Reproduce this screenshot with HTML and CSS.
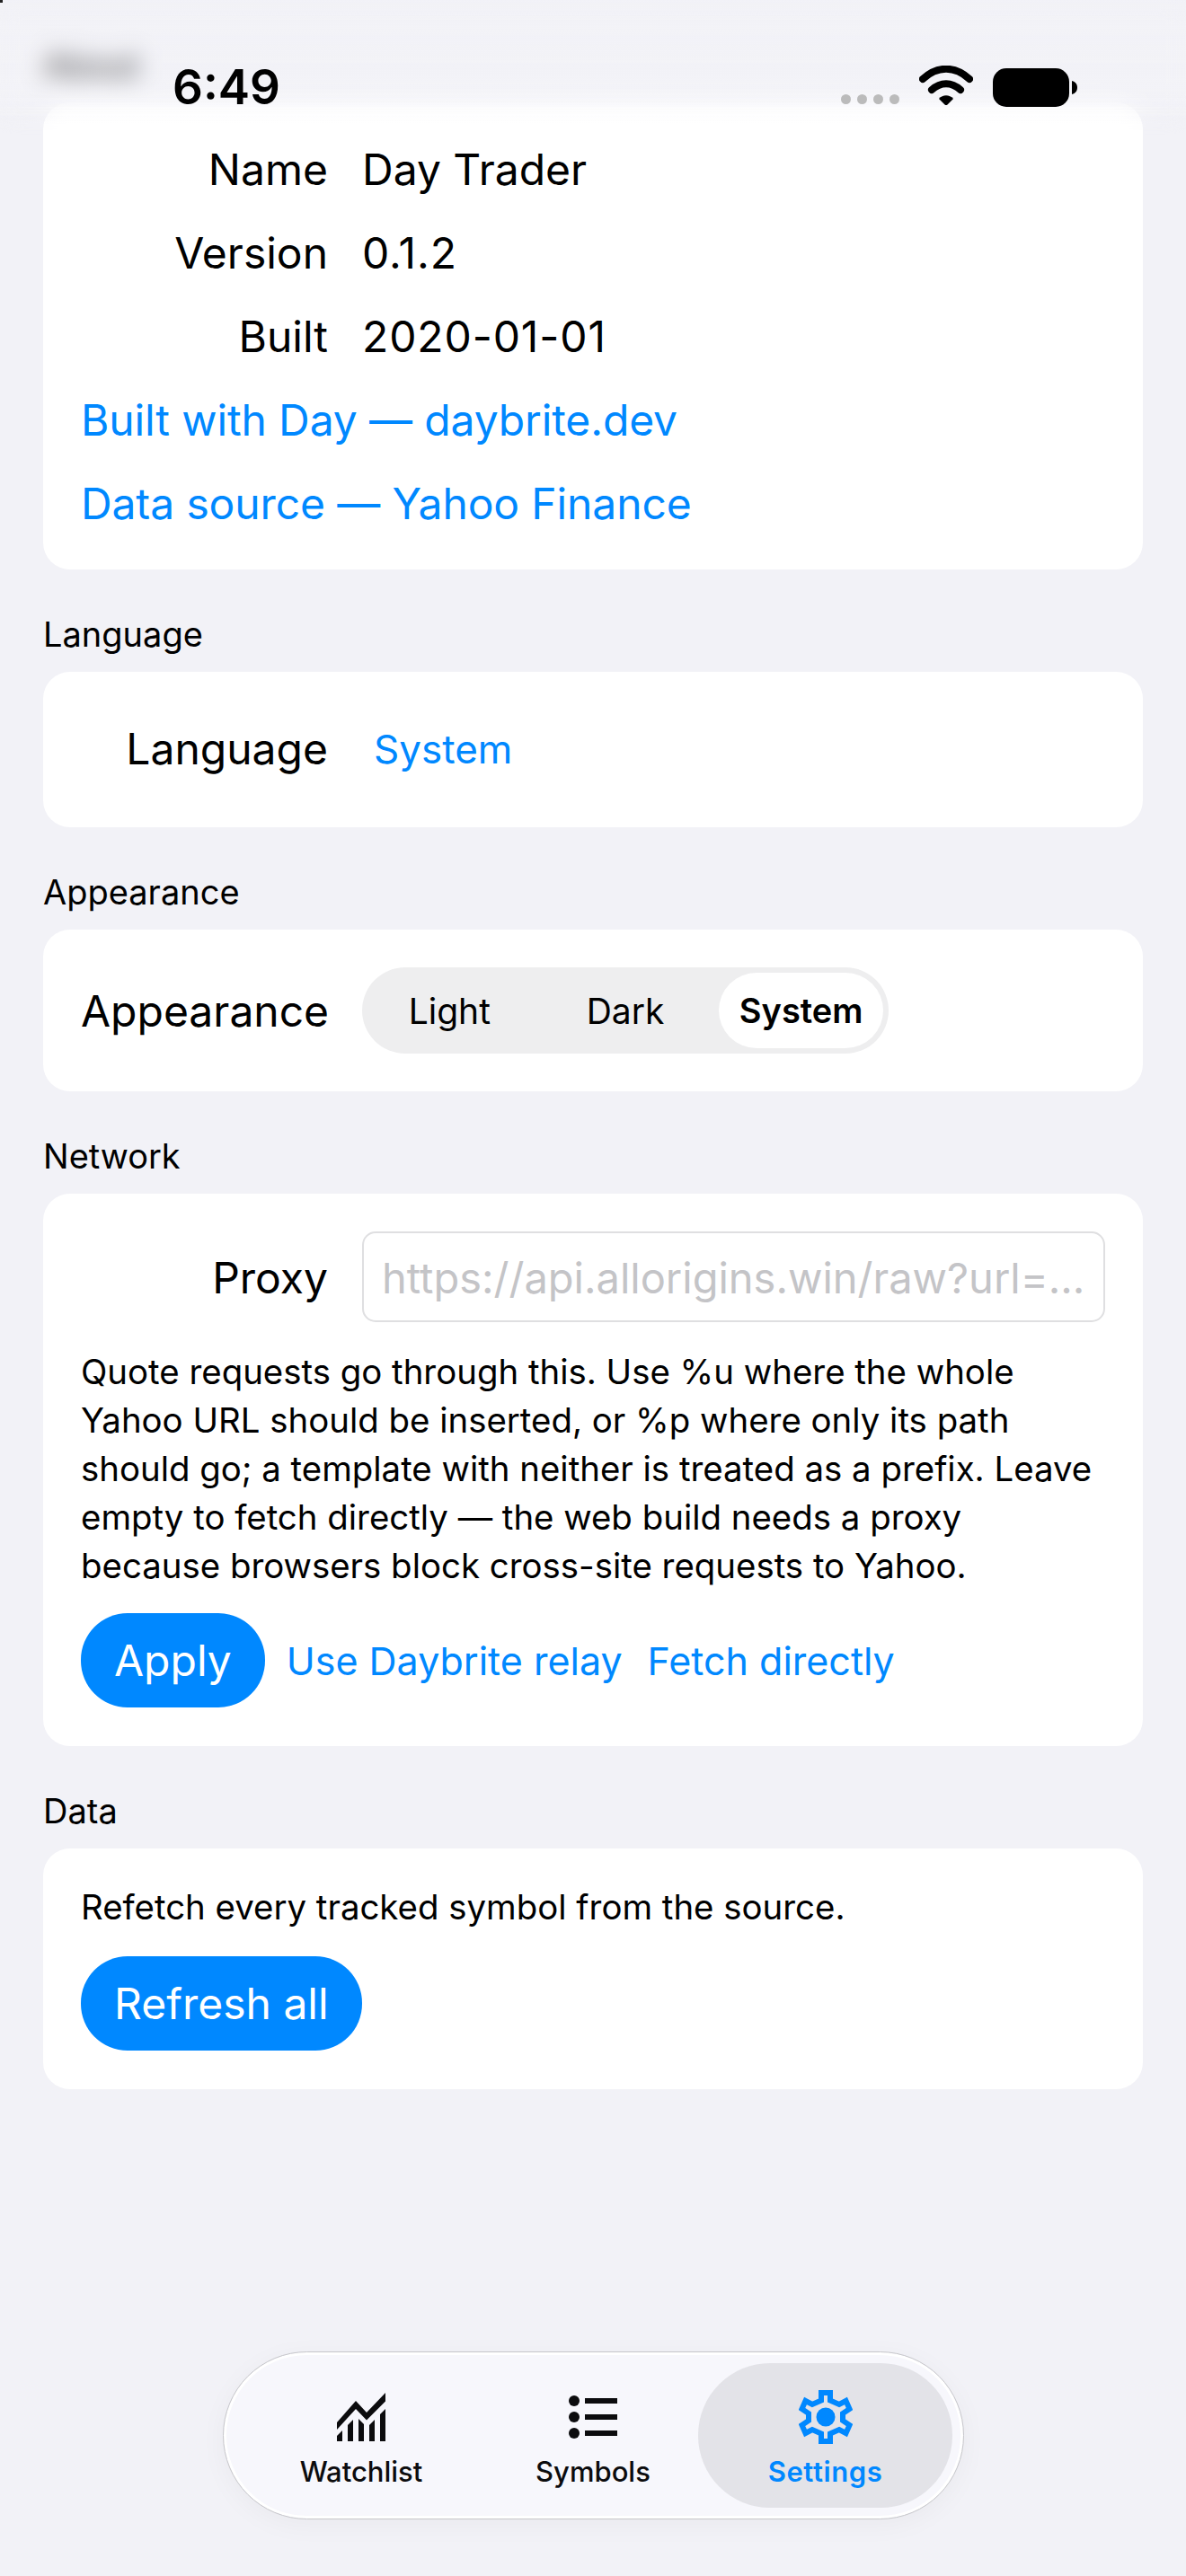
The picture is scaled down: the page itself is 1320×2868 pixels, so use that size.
FILE: index.html
```html
<!DOCTYPE html>
<html lang="en">
<head>
<meta charset="utf-8">
<title>Day Trader Settings</title>
<link rel="stylesheet" href="styles.css">
</head>
<body>
<main class="page">
  <section class="section section-about">
    <h2 class="section-title">About</h2>
    <div class="card card-about">
      <div class="row"><span class="row-label">Name</span><span class="row-value">Day Trader</span></div>
      <div class="row"><span class="row-label">Version</span><span class="row-value row-num">0.1.2</span></div>
      <div class="row"><span class="row-label">Built</span><span class="row-value row-num">2020-01-01</span></div>
      <div class="row"><a class="link link-tight">Built with Day — daybrite.dev</a></div>
      <div class="row"><a class="link link-tight">Data source — Yahoo Finance</a></div>
    </div>
  </section>
  <section class="section">
    <h2 class="section-title">Language</h2>
    <div class="card card-language">
      <div class="row"><span class="row-label">Language</span><span class="picker">System</span></div>
    </div>
  </section>
  <section class="section">
    <h2 class="section-title">Appearance</h2>
    <div class="card card-appearance">
      <div class="row">
        <span class="row-label">Appearance</span>
        <div class="segmented">
          <span class="segment">Light</span>
          <span class="segment">Dark</span>
          <span class="segment segment-active">System</span>
        </div>
      </div>
    </div>
  </section>
  <section class="section">
    <h2 class="section-title">Network</h2>
    <div class="card card-network">
      <div class="row row-proxy">
        <span class="row-label">Proxy</span>
        <div class="input"><span class="placeholder">https://api.allorigins.win/raw?url=...</span></div>
      </div>
      <p class="body-text">Quote requests go through this. Use %u where the whole Yahoo URL should be inserted, or %p where only its path should go; a template with neither is treated as a prefix. Leave empty to fetch directly — the web build needs a proxy because browsers block cross-site requests to Yahoo.</p>
      <div class="actions">
        <button class="btn">Apply</button>
        <a class="link link-action">Use Daybrite relay</a>
        <a class="link link-action">Fetch directly</a>
      </div>
    </div>
  </section>
  <section class="section">
    <h2 class="section-title">Data</h2>
    <div class="card card-data">
      <p class="body-text">Refetch every tracked symbol from the source.</p>
      <button class="btn">Refresh all</button>
    </div>
  </section>
</main>

<div class="top-blur"></div>
<div class="corner-mark"></div>
<header class="status">
  <span class="time">6:49</span>
  <div class="status-icons">
    <div class="dots"><i></i><i></i><i></i><i></i></div>
    <svg class="wifi" width="60" height="44" viewBox="0 0 60 44"><path d="M4 15 C20 0 40 0 56 15" fill="none" stroke="#000" stroke-width="8" stroke-linecap="round"/><path d="M14 27 C24 18 36 18 46 27" fill="none" stroke="#000" stroke-width="8" stroke-linecap="round"/><path d="M22 37 C26 32 34 32 38 37 L31.500 43.500 Q30 44.500 28.500 43.500 Z" fill="#000"/></svg>
    <svg class="battery" width="94" height="43" viewBox="0 0 94 43"><rect x="0" y="0" width="85" height="43" rx="15" fill="#000"/><path d="M88 14 C92 15 94 18 94 21.500 C94 25 92 28 88 29 Z" fill="#000"/></svg>
  </div>
</header>

<nav class="tabbar">
  <div class="tab">
    <svg class="tab-icon" width="54" height="54" viewBox="0 0 54 54" fill="#0c0c0e"><path d="M0 33L21 9L33 22L54 0V9.500L33 30.500L21 18L0 41Z"/><path d="M0 54V48L6 42V54Z"/><path d="M12 54V36L18 30V54Z"/><path d="M24 54V29L30 35V54Z"/><path d="M36 54V36L42 30V54Z"/><path d="M48 54V24L54 18V54Z"/></svg>
    <span class="tab-label">Watchlist</span>
  </div>
  <div class="tab">
    <svg class="tab-icon" width="54" height="54" viewBox="0 0 54 54" fill="#0c0c0e"><circle cx="6" cy="9" r="6"/><circle cx="6" cy="27" r="6"/><circle cx="6" cy="45" r="6"/><rect x="18" y="6" width="36" height="6"/><rect x="18" y="24" width="36" height="6"/><rect x="18" y="42" width="36" height="6"/></svg>
    <span class="tab-label">Symbols</span>
  </div>
  <div class="tab tab-active">
    <svg class="tab-icon" width="60" height="60" viewBox="0 0 60 60"><path d="M25 3H35V11.500L45 16L52.500 12L56.500 21L49 26V34L56.500 39L52.500 48L45 44L35 48.500V57H25V48.500L15 44L7.500 48L3.500 39L11 34V26L3.500 21L7.500 12L15 16L25 11.500Z" fill="none" stroke="#0088ff" stroke-width="6"/><circle cx="30" cy="30" r="10.500" fill="#0088ff"/></svg>
    <span class="tab-label">Settings</span>
  </div>
</nav>
</body>
</html>
```
FILE: styles.css
```css
* { box-sizing: border-box; }
html, body { margin: 0; padding: 0; }
body {
  width: 1320px;
  height: 2868px;
  position: relative;
  overflow: hidden;
  background: #f2f2f7;
  font-family: Inter, "Liberation Sans", sans-serif;
  color: #000;
}
.page { padding: 48px 48px 0; display: flex; flex-direction: column; gap: 48px; }
.section-title { margin: 0 0 18px; font-size: 38px; line-height: 48px; font-weight: 400; }
.card { background: #fff; border-radius: 30px; padding: 0 42px; }
.card-about { height: 520px; padding-top: 28px; }
.card-about .row { height: 93px; }
.row { display: flex; align-items: center; gap: 38px; font-size: 48px; }
.row-label { width: 275px; text-align: right; flex: none; }
.row-num { letter-spacing: 0.9px; }
.link { color: #0088ff; }
.link-tight { letter-spacing: -0.12px; }
.card-language { height: 173px; padding-bottom: 2px; display: flex; align-items: center; }
.picker { color: #0088ff; font-size: 44px; margin-left: 13px; }
.card-appearance { height: 180px; display: flex; align-items: center; }
.segmented { display: flex; align-items: center; gap: 13px; height: 96px; width: 586px; padding: 6px; border-radius: 48px; background: #eeeeef; }
.segment { flex: 1; text-align: center; font-size: 39px; font-weight: 400; }
.segment-active { background: #fff; height: 84px; line-height: 84px; border-radius: 42px; font-size: 38px; font-weight: 600; }
.card-network { height: 615px; padding-top: 42px; }
.row-proxy { height: 101px; }
.row-proxy .row-label, .placeholder { padding-top: 2px; }
.input { flex: 1; height: 101px; border: 2px solid #dfdfe1; border-radius: 15px; padding: 0 20px; display: flex; align-items: center; overflow: hidden; white-space: nowrap; }
.placeholder { color: #c4c4c7; font-size: 47px; }
.body-text { margin: 0; font-size: 38.400px; line-height: 54px; }
.card-network .body-text { margin-top: 28px; }
.actions { display: flex; align-items: center; gap: 28px; margin-top: 26px; font-size: 43px; }
.actions .btn { margin-right: -4px; }
.btn { display: block; height: 105px; padding: 0 37px; border: 0; border-radius: 52px; background: #0088ff; color: #fff; font: inherit; font-size: 48px; }
.card-data { height: 268px; padding-top: 38px; }
.card-data .btn { margin-top: 28px; }
.top-blur {
  position: absolute; left: 0; top: 0; width: 1320px; height: 150px;
  backdrop-filter: blur(13px);
  background: linear-gradient(to bottom, rgba(242,242,247,.45), rgba(255,255,255,.1));
  -webkit-mask-image: linear-gradient(to bottom, #000 70%, transparent 100%);
  mask-image: linear-gradient(to bottom, #000 70%, transparent 100%);
}
.corner-mark { position: absolute; left: 0; top: 0; width: 3px; height: 3px; background: #222; }
.status { position: absolute; left: 192px; top: 0; width: 1007px; height: 140px; }
.time { position: absolute; left: 0; top: 65px; font-size: 53px; line-height: 64px; font-weight: 600; }
.status-icons { position: absolute; left: 744px; top: 0; width: 263px; height: 140px; }
.dots { position: absolute; left: 0; top: 105px; display: flex; gap: 7px; }
.dots i { width: 11px; height: 11px; border-radius: 50%; background: #bbb; display: block; }
.wifi { position: absolute; left: 87px; top: 73px; }
.battery { position: absolute; left: 169px; top: 76px; }
.tabbar {
  position: absolute; left: 248px; top: 2618px; width: 825px; height: 187px;
  padding: 12px; border-radius: 94px;
  background: #f7f7fc;
  border: 1px solid #c6c6ca;
  box-shadow: inset 0 0 0 3px #fff, 0 6px 30px rgba(0,0,0,.04);
  display: grid; grid-template-columns: 282px 234px 283px;
}
.tab { display: flex; flex-direction: column; align-items: center; border-radius: 80px; height: 161px; padding-top: 33px; }
.tab-icon { display: block; flex: none; }
.tab-label { font-size: 31px; line-height: 36px; font-weight: 500; margin-top: 16px; color: #0c0c0e; }
.tab-active { background: #e3e3e8; padding-top: 30px; }
.tab-active .tab-label { color: #0088ff; font-weight: 600; margin-top: 13px; letter-spacing: 0.6px; }
```
